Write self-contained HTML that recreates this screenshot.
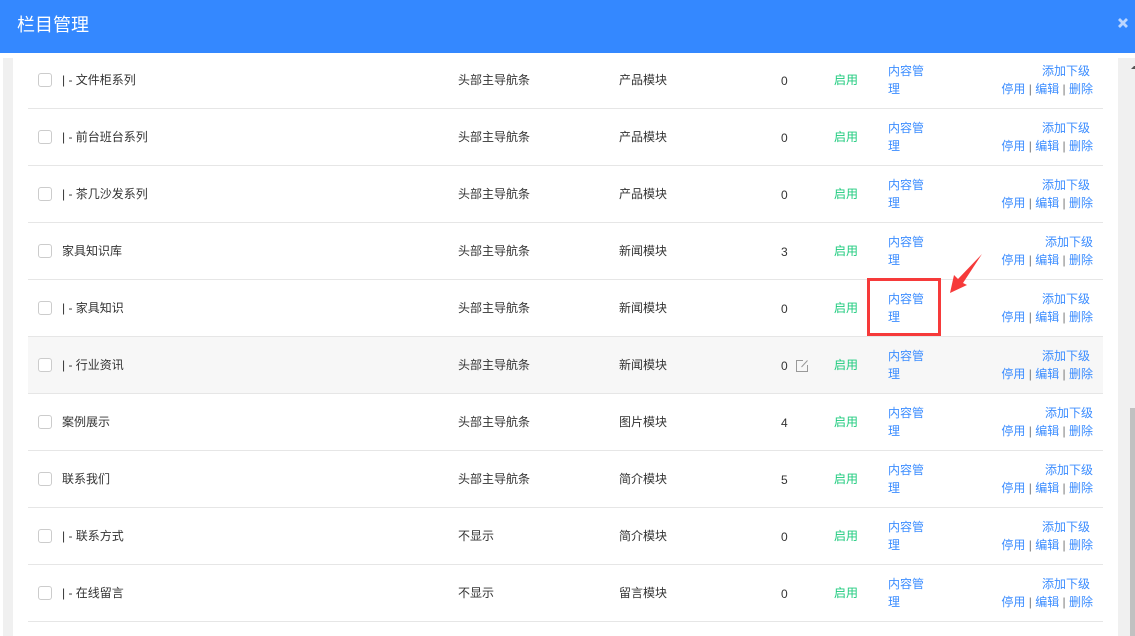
<!DOCTYPE html>
<html lang="zh-CN"><head><meta charset="utf-8"><title>栏目管理</title>
<style>
html,body{margin:0;padding:0;width:1135px;height:636px;overflow:hidden;background:#fff}
body{position:relative;font:12px/18px "Liberation Sans","Noto Sans CJK SC",sans-serif;color:#333}
.hd{position:absolute;left:0;top:0;width:1135px;height:53px;background:#3488ff;color:#fff;font-size:18px;line-height:51px;text-indent:17px}
.x{position:absolute;left:1116px;top:16px;width:14px;height:14px}
.sl{position:absolute;left:3px;top:58px;width:10px;height:578px;background:#f0f0f0}
.sr{position:absolute;left:1118px;top:58px;width:17px;height:578px;background:#f0f0f0}
.th{position:absolute;left:1130px;top:408px;width:5px;height:228px;background:#c1c1c1}
.up{position:absolute;left:1131px;top:65px}
.r{position:absolute;left:28px;width:1075px;height:56px;border-bottom:1px solid #e6e6e6}
.h{background:#f7f7f7}
.r>*{position:absolute}
.c{left:10px;top:21px;width:12px;height:12px;border:1px solid #ccc;border-radius:3px;background:#fff}
.n{left:34px;top:19px;white-space:nowrap}
.p{left:430px;top:19px}
.m{left:591px;top:19px}
.q{left:753px;top:20px}
.s{left:806px;top:19px;color:#1ecb7e}
.g{left:860px;top:10px;width:40px;color:#3c8dff}
.a{right:10px;top:10px;width:110px;text-align:right;color:#3c8dff}
.a i{font-style:normal;display:block}
.a.w i{padding-right:3px}
.a span{color:#777}
.a b{font-weight:400;display:block}
.e{left:767px;top:22px}
.box{position:absolute;left:867px;top:278px;width:68px;height:52px;border:3px solid #f63a3a}
.arr{position:absolute;left:945px;top:250px}
</style></head><body>
<div class="hd">栏目管理</div>
<svg class="x" viewBox="0 0 14 14"><path d="M3 3L11 11M11 3L3 11" stroke="#bcd6ff" stroke-width="2.800"/></svg>
<div class="sl"></div><div class="sr"></div><div class="th"></div>
<svg class="up" width="4" height="5" viewBox="0 0 4 5"><path d="M3 1L0 4H4V1Z" fill="#555"/></svg>

<div class="r" style="top:52px"><div class="c"></div><div class="n">| - 文件柜系列</div><div class="p">头部主导航条</div><div class="m">产品模块</div><div class="q">0</div><div class="s">启用</div><div class="g">内容管理</div><div class="a w"><i>添加下级</i><b>停用 <span>|</span> 编辑 <span>|</span> 删除</b></div></div>
<div class="r" style="top:109px"><div class="c"></div><div class="n">| - 前台班台系列</div><div class="p">头部主导航条</div><div class="m">产品模块</div><div class="q">0</div><div class="s">启用</div><div class="g">内容管理</div><div class="a w"><i>添加下级</i><b>停用 <span>|</span> 编辑 <span>|</span> 删除</b></div></div>
<div class="r" style="top:166px"><div class="c"></div><div class="n">| - 茶几沙发系列</div><div class="p">头部主导航条</div><div class="m">产品模块</div><div class="q">0</div><div class="s">启用</div><div class="g">内容管理</div><div class="a w"><i>添加下级</i><b>停用 <span>|</span> 编辑 <span>|</span> 删除</b></div></div>
<div class="r" style="top:223px"><div class="c"></div><div class="n">家具知识库</div><div class="p">头部主导航条</div><div class="m">新闻模块</div><div class="q">3</div><div class="s">启用</div><div class="g">内容管理</div><div class="a"><i>添加下级</i><b>停用 <span>|</span> 编辑 <span>|</span> 删除</b></div></div>
<div class="r" style="top:280px"><div class="c"></div><div class="n">| - 家具知识</div><div class="p">头部主导航条</div><div class="m">新闻模块</div><div class="q">0</div><div class="s">启用</div><div class="g">内容管理</div><div class="a w"><i>添加下级</i><b>停用 <span>|</span> 编辑 <span>|</span> 删除</b></div></div>
<div class="r h" style="top:337px"><div class="c"></div><div class="n">| - 行业资讯</div><div class="p">头部主导航条</div><div class="m">新闻模块</div><div class="q">0</div>
<svg class="e" width="14" height="14" viewBox="0 0 14 14" fill="none"><path d="M8 1.500H1.500V12.500H12.500V6" stroke="#999" stroke-width="1"/><path d="M12.500 1.500L6.500 8" stroke="#999" stroke-width="1"/></svg>
<div class="s">启用</div><div class="g">内容管理</div><div class="a w"><i>添加下级</i><b>停用 <span>|</span> 编辑 <span>|</span> 删除</b></div></div>
<div class="r" style="top:394px"><div class="c"></div><div class="n">案例展示</div><div class="p">头部主导航条</div><div class="m">图片模块</div><div class="q">4</div><div class="s">启用</div><div class="g">内容管理</div><div class="a"><i>添加下级</i><b>停用 <span>|</span> 编辑 <span>|</span> 删除</b></div></div>
<div class="r" style="top:451px"><div class="c"></div><div class="n">联系我们</div><div class="p">头部主导航条</div><div class="m">简介模块</div><div class="q">5</div><div class="s">启用</div><div class="g">内容管理</div><div class="a"><i>添加下级</i><b>停用 <span>|</span> 编辑 <span>|</span> 删除</b></div></div>
<div class="r" style="top:508px"><div class="c"></div><div class="n">| - 联系方式</div><div class="p">不显示</div><div class="m">简介模块</div><div class="q">0</div><div class="s">启用</div><div class="g">内容管理</div><div class="a w"><i>添加下级</i><b>停用 <span>|</span> 编辑 <span>|</span> 删除</b></div></div>
<div class="r" style="top:565px"><div class="c"></div><div class="n">| - 在线留言</div><div class="p">不显示</div><div class="m">留言模块</div><div class="q">0</div><div class="s">启用</div><div class="g">内容管理</div><div class="a w"><i>添加下级</i><b>停用 <span>|</span> 编辑 <span>|</span> 删除</b></div></div>

<div class="box"></div>
<svg class="arr" width="40" height="46" viewBox="0 0 40 46"><path d="M37 4L13 29L9 25L5 43L22 35L18 33Z" fill="#f63a3a"/></svg>
</body></html>
